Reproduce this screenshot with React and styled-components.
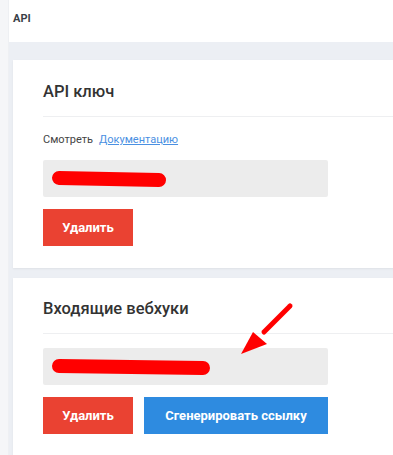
import React from "react";
import styled, { createGlobalStyle } from "styled-components";

const GlobalStyle = createGlobalStyle`
  html, body {
    margin: 0;
    padding: 0;
    background: #eceff4;
    overflow: hidden;
  }
  * {
    box-sizing: border-box;
  }
`;

const Page = styled.div`
  display: flex;
  width: 393px;
  min-height: 455px;
  overflow: hidden;
  font-family: "Roboto", "Liberation Sans", sans-serif;
  color: #333;
`;

const SideStrip = styled.div`
  width: 9px;
  flex-shrink: 0;
  background: #f5f6f8;
  border-right: 1px solid #eef0f3;
`;

const Main = styled.div`
  flex: 1;
  display: flex;
  flex-direction: column;
  min-width: 0;
  overflow: hidden;
`;

const Header = styled.div`
  height: 42px;
  background: #fff;
  display: flex;
  align-items: center;
  padding: 0 0 6px 4px;
  font-size: 11px;
  font-weight: 700;
  color: #3a3f47;
`;

const Content = styled.div`
  display: flex;
  flex-direction: column;
  gap: 10px;
  padding: 18px 0 0 4px;
`;

const Card = styled.div`
  position: relative;
  width: 420px;
  background: #fff;
  padding: ${(p) => (p.$last ? "21px" : "22px")} 0 ${(p) => (p.$last ? "40px" : "22px")} 30px;
  box-shadow: 0 1px 2px rgba(0, 0, 0, 0.06);
`;

const Title = styled.h2`
  margin: 0;
  font-size: 16.5px;
  font-weight: 500;
  line-height: 20px;
  color: #333;
  padding-bottom: 14px;
  border-bottom: 1px solid #eeeff1;
`;

const Hint = styled.div`
  display: flex;
  gap: 6px;
  font-size: 11px;
  line-height: 14px;
  color: #444;
  margin-top: 16px;
`;

const DocLink = styled.a`
  color: #4a90e2;
  text-decoration: underline;
  cursor: pointer;
`;

const KeyBox = styled.div`
  width: 285px;
  height: 37px;
  margin-top: ${(p) => p.$top}px;
  background: #ececec;
  border-radius: 2px;
  display: flex;
  align-items: center;
  padding-left: 7px;
`;

const Actions = styled.div`
  display: flex;
  gap: 11px;
  margin-top: 12px;
`;

const Button = styled.button`
  height: 37px;
  padding: 0;
  width: ${(p) => (p.$wide ? "184px" : "90px")};
  border: none;
  background: ${(p) => (p.$variant === "blue" ? "#2e8be0" : "#ea4232")};
  color: #fff;
  font-family: "Roboto", "Liberation Sans", sans-serif;
  font-size: 13px;
  font-weight: 700;
  white-space: nowrap;
  cursor: pointer;
`;

const ArrowMark = styled.svg`
  position: absolute;
  left: 224px;
  top: 23px;
`;

function Scribble({ width }) {
  return (
    <svg width={width + 4} height="18" viewBox={`0 0 ${width + 4} 18`}>
      <line
        x1="9"
        y1="8"
        x2={width - 5}
        y2="10"
        stroke="#ff0000"
        strokeWidth="14"
        strokeLinecap="round"
      />
    </svg>
  );
}

export default function App() {
  return (
    <>
      <GlobalStyle />
      <Page>
        <SideStrip />
        <Main>
          <Header>API</Header>
          <Content>
            <Card>
              <Title>API ключ</Title>
              <Hint>
                <span>Смотреть</span>
                <DocLink>Документацию</DocLink>
              </Hint>
              <KeyBox $top={13}>
                <Scribble width={114} />
              </KeyBox>
              <Actions>
                <Button>Удалить</Button>
              </Actions>
            </Card>
            <Card $last>
              <Title>Входящие вебхуки</Title>
              <KeyBox $top={14}>
                <Scribble width={158} />
              </KeyBox>
              <Actions>
                <Button>Удалить</Button>
                <Button $variant="blue" $wide>
                  Сгенерировать ссылку
                </Button>
              </Actions>
              <ArrowMark width="72" height="58" viewBox="0 0 72 58">
                <line
                  x1="53"
                  y1="5"
                  x2="27"
                  y2="31"
                  stroke="#ff0000"
                  strokeWidth="5"
                  strokeLinecap="round"
                />
                <polygon points="4,53 16,31 30,43" fill="#ff0000" />
              </ArrowMark>
            </Card>
          </Content>
        </Main>
      </Page>
    </>
  );
}
